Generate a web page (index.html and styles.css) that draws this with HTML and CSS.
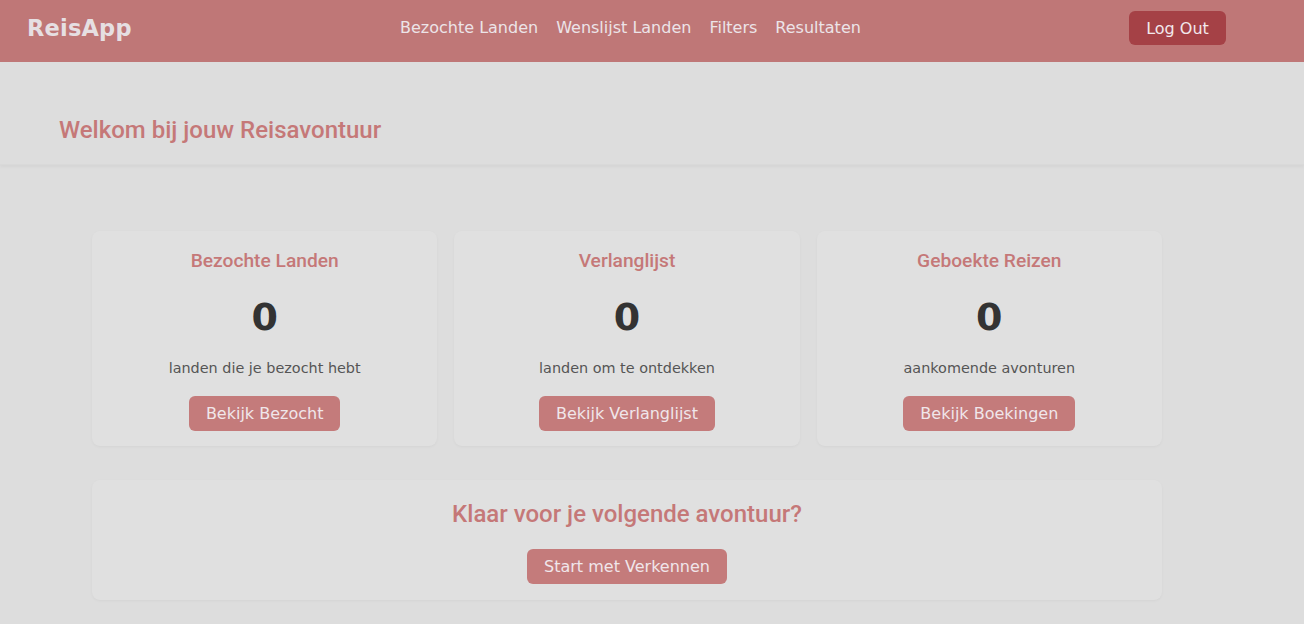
FILE: index.html
```html
<!DOCTYPE html>
<html lang="nl">
<head>
<meta charset="utf-8">
<title>ReisApp</title>
<link rel="stylesheet" href="styles.css">
</head>
<body>
<header class="topbar">
  <div class="logo">ReisApp</div>
  <nav class="nav">
    <a href="#">Bezochte Landen</a>
    <a href="#">Wenslijst Landen</a>
    <a href="#">Filters</a>
    <a href="#">Resultaten</a>
  </nav>
  <button class="logout">Log Out</button>
</header>
<section class="welcome">
  <h1>Welkom bij jouw Reisavontuur</h1>
</section>
<main class="main">
  <div class="cards">
    <div class="card">
      <h3>Bezochte Landen</h3>
      <div class="count">0</div>
      <p>landen die je bezocht hebt</p>
      <button class="btn">Bekijk Bezocht</button>
    </div>
    <div class="card">
      <h3>Verlanglijst</h3>
      <div class="count">0</div>
      <p>landen om te ontdekken</p>
      <button class="btn">Bekijk Verlanglijst</button>
    </div>
    <div class="card">
      <h3>Geboekte Reizen</h3>
      <div class="count">0</div>
      <p>aankomende avonturen</p>
      <button class="btn">Bekijk Boekingen</button>
    </div>
  </div>
  <div class="cta">
    <h2>Klaar voor je volgende avontuur?</h2>
    <button class="btn">Start met Verkennen</button>
  </div>
</main>
</body>
</html>
```
FILE: styles.css
```css
* { box-sizing: border-box; }
html, body { margin: 0; padding: 0; }
body {
  background: #dddddd;
  font-family: "DejaVu Sans", "Open Sans", sans-serif;
  color: #444;
  height: 624px;
  overflow: hidden;
}
.topbar {
  height: 62px;
  background: #bf7777;
  display: flex;
  align-items: center;
  padding: 0 0 0 27px;
}
.logo {
  color: #e6dfe2;
  font-weight: bold;
  font-size: 22.5px;
  letter-spacing: 0.2px;
  width: 104px;
  margin-top: -6px;
}
.nav {
  margin-left: 269px;
  display: flex;
  gap: 18px;
  margin-top: -7px;
}
.nav a {
  color: #ece4e8;
  text-decoration: none;
  font-size: 16px;
}
.logout {
  margin-left: auto;
  margin-right: 78px;
  background: #a54146;
  color: #f2e8ec;
  border: none;
  border-radius: 6px;
  width: 97px;
  height: 34px;
  font-family: inherit;
  font-size: 16px;
  margin-top: -6px;
}
.welcome {
  height: 103px;
  padding: 54px 59px 0;
  box-shadow: 0 2px 3px rgba(0,0,0,0.04);
  border-bottom: 1px solid #d9d9d9;
}
.welcome h1 {
  margin: 0;
  font-family: Roboto, sans-serif;
  font-weight: 500;
  font-size: 24px;
  line-height: 28px;
  color: #c57878;
}
.main {
  padding: 66px 0 0 92px;
  width: 1162px;
}
.cards {
  display: grid;
  grid-template-columns: repeat(3, 1fr);
  gap: 17px;
}
.card {
  background: #e0e0e0;
  border-radius: 8px;
  box-shadow: 0 1px 3px rgba(0,0,0,0.04);
  height: 215px;
  display: flex;
  flex-direction: column;
  align-items: center;
  padding-top: 19px;
}
.card h3 {
  margin: 0;
  font-family: Roboto, sans-serif;
  font-weight: 500;
  font-size: 19.2px;
  color: #c57878;
  line-height: 21px;
}
.count {
  margin-top: 24px;
  font-weight: bold;
  font-size: 38px;
  color: #333;
  line-height: 45px;
}
.card p {
  margin: 20px 0 0;
  font-size: 14.4px;
  color: #555;
  line-height: 17px;
}
.btn {
  margin-top: 19px;
  background: #c47b7b;
  color: #f0e6ea;
  border: none;
  border-radius: 6px;
  height: 35px;
  padding: 0 17px;
  font-family: inherit;
  font-size: 16px;
}
.cta {
  margin-top: 34px;
  background: #e0e0e0;
  border-radius: 8px;
  box-shadow: 0 1px 3px rgba(0,0,0,0.04);
  height: 120px;
  display: flex;
  flex-direction: column;
  align-items: center;
  padding-top: 20px;
}
.cta h2 {
  margin: 0;
  font-family: Roboto, sans-serif;
  font-weight: 500;
  font-size: 24px;
  line-height: 28px;
  color: #c57878;
}
.cta .btn {
  margin-top: 21px;
}
```
